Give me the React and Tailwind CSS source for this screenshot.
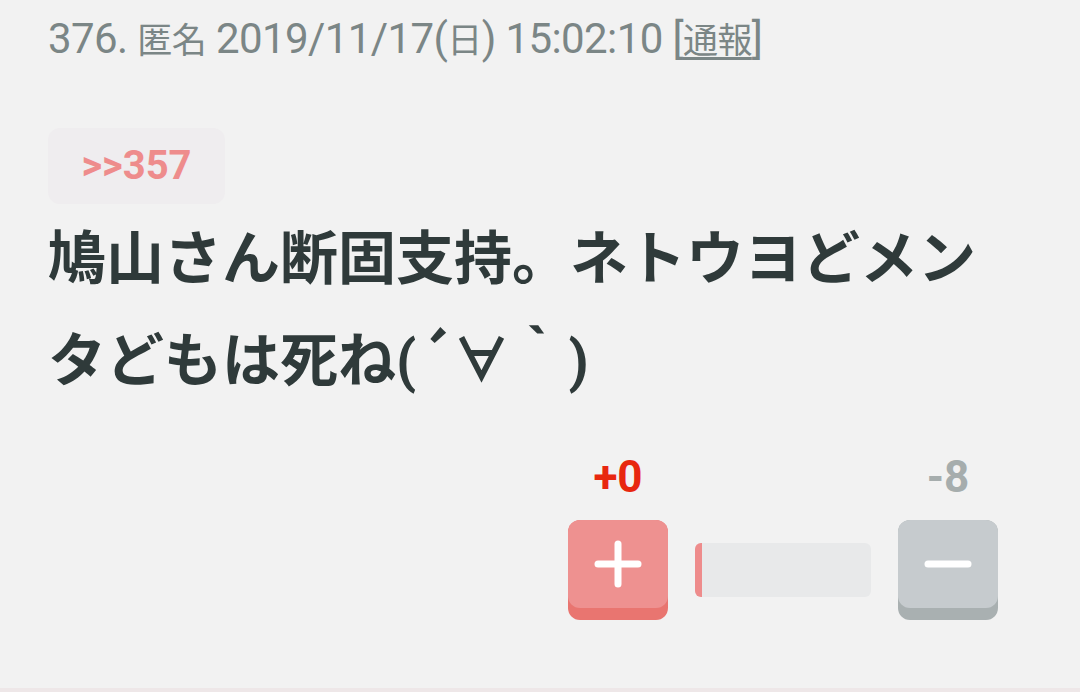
import React from "react";

const FONT = { fontFamily: 'Roboto, "Noto Sans CJK JP", sans-serif' };
const CJK = { fontFamily: '"Noto Sans CJK JP", sans-serif' };

function VoteButton({ kind }) {
  const plus = kind === "plus";
  return (
    <button
      className={`relative w-[100px] h-[100px] rounded-[12px] flex items-center justify-center ${
        plus ? "bg-[#e97570]" : "bg-[#a9b0b1]"
      }`}
    >
      <span
        className={`absolute left-0 right-0 top-0 h-[88px] rounded-[12px] ${
          plus ? "bg-[#ee9190]" : "bg-[#c6cbce]"
        }`}
      />
      <svg className="relative -mt-[12px]" width="48" height="48" viewBox="0 0 48 48">
        {plus && (
          <line x1="24" y1="4" x2="24" y2="44" stroke="white" strokeWidth="7" strokeLinecap="round" />
        )}
        <line x1="4" y1="24" x2="44" y2="24" stroke="white" strokeWidth="7" strokeLinecap="round" />
      </svg>
    </button>
  );
}

export default function App() {
  return (
    <div className="w-[1080px] h-[692px] bg-[#f2f2f2] flex flex-col" style={FONT}>
      <div className="px-12 pt-[14px] text-[42px] leading-[48px] tracking-[-0.6px] text-[#7b8686] whitespace-nowrap">
        376. <span className="text-[35px]" style={CJK}>匿名</span> 2019/11/17(
        <span className="text-[35px]" style={CJK}>日</span>) 15:02:10 [
        <span className="text-[35px] underline underline-offset-4" style={CJK}>通報</span>]
      </div>

      <div className="px-12 mt-[65px]">
        <div className="w-[177px] h-[76px] rounded-[12px] bg-[#efedef] flex items-center justify-center text-[40px] font-bold text-[#ee8c8c]">
          &gt;&gt;357
        </div>
      </div>

      <div className="px-12 mt-[7px] text-[58px] leading-[97px] font-bold text-[#2f3a3a]">
        鳩山さん断固支持。ネトウヨどメンタどもは死ね(
        <span style={CJK}>´∀｀</span>)
      </div>

      <div className="flex justify-end pr-[82px] mt-[43px]">
        <div className="flex flex-col w-[430px]">
          <div className="flex justify-between text-[44px] leading-[48px] font-bold">
            <span className="w-[100px] text-center text-[#e8270f]">+0</span>
            <span className="w-[100px] text-center text-[#a6adad]">-8</span>
          </div>
          <div className="flex items-center justify-between mt-[19px]">
            <VoteButton kind="plus" />
            <div className="w-[176px] h-[54px] rounded-[6px] bg-[#e8e9ea] overflow-hidden flex">
              <div className="w-[7px] h-full bg-[#ee8c8c]" />
            </div>
            <VoteButton kind="minus" />
          </div>
        </div>
      </div>

      <div className="mt-auto h-[4px] bg-[#eee7e8]" />
    </div>
  );
}
